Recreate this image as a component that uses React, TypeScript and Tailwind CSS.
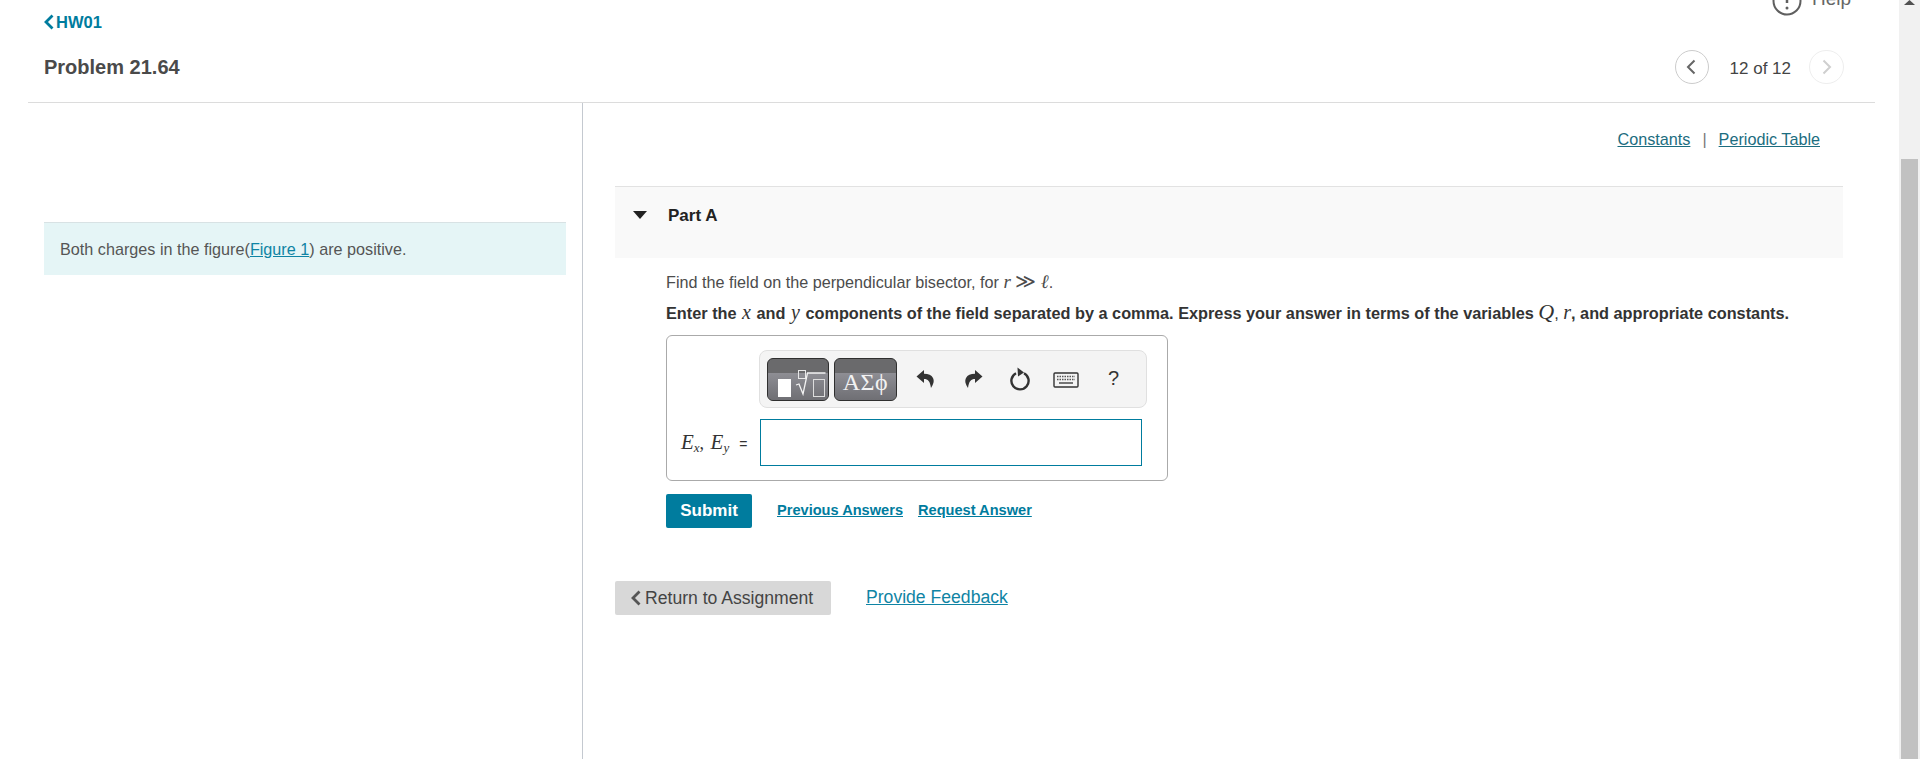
const sans = "font-['Liberation_Sans',Arial,sans-serif]";
const math = "font-['Liberation_Serif',serif] italic";

const Chevron = ({ right = false, weight = 2.8, className = '' }: { right?: boolean; weight?: number; className?: string }) => (
  <svg className={className} width="11" height="16" viewBox="0 0 11 16" fill="none">
    <path d={right ? 'M2.5 1.5L9 8l-6.5 6.5' : 'M8.5 1.5L2 8l6.5 6.5'} stroke="currentColor" strokeWidth={weight} />
  </svg>
);

// Toolbar button with the dark band on top
const ToolButton = ({ width, children }: { width: string; children: React.ReactNode }) => (
  <div className={`relative h-[43px] ${width} rounded-[6px] border border-[#2f2f2f] overflow-hidden bg-[#6a6a6c] shrink-0`}>
    <div className="absolute inset-x-0 bottom-0 top-[14px] bg-gradient-to-b from-[#8e8e94] to-[#6f6f74]" />
    <div className="relative h-full">{children}</div>
  </div>
);

const TemplatesIcon = () => (
  <svg width="60" height="41" viewBox="0 0 60 41" fill="none">
    <rect x="10" y="20" width="13" height="18" fill="#fff" />
    <rect x="30.5" y="11.5" width="7" height="8" stroke="#e8e8e8" strokeWidth="1" />
    <path d="M28 26l3-1 4 10 4.500-21h18" stroke="#f2f2f2" strokeWidth="1.3" />
    <rect x="45.500" y="20.500" width="11" height="17" stroke="#dddddd" strokeWidth="1" />
  </svg>
);

const ArrowIcon = ({ flip = false }: { flip?: boolean }) => (
  <svg className={flip ? '-scale-x-100' : ''} width="19" height="20" viewBox="0 0 19 20">
    <path d="M8 1L0.500 7.500 8 14v-4c4 0 6 2 7 9 2.500-4 3.500-7 2-10-1.500-3-4.500-4-9-4.200z" fill="#333" />
  </svg>
);

const KeyboardIcon = () => (
  <svg width="26" height="16" viewBox="0 0 26 16" fill="none">
    <rect x="1" y="1" width="24" height="14" rx="1" stroke="#333" strokeWidth="1.4" />
    <path d="M4 4.500h18M4 7.500h18" stroke="#555" strokeWidth="1.500" strokeDasharray="1.500 1" />
    <path d="M6 11h14" stroke="#555" strokeWidth="1.600" />
  </svg>
);

const RotateIcon = () => (
  <svg width="22" height="24" viewBox="0 0 22 24" fill="none">
    <path d="M7 6.200A8.600 8.600 0 1 0 15 6.200" stroke="#333" strokeWidth="2.400" />
    <path d="M8.500 0.500l6.500 5-6 4z" fill="#333" />
  </svg>
);

export default function App() {
  return (
    <div className={`flex h-[759px] w-full overflow-hidden bg-white ${sans}`}>
      <div className="flex-1 min-w-0 pl-[28px] pr-[24px]">
        {/* Header */}
        <header className="h-[102px] box-content border-b border-[#dcdcdc] pl-[16px] pr-[31px]">
          <div className="flex justify-between">
            <a className="mt-[13px] flex items-center gap-[1px] text-[#007c9e] text-[16.5px] leading-[18px] font-bold">
              <Chevron />
              HW01
            </a>
            <div className="-mt-[14px] mr-[-18px] flex items-start gap-[10px] text-[#666] text-[19px] leading-[20px]">
              <svg width="30" height="30" viewBox="0 0 30 30" fill="none">
                <circle cx="15" cy="15" r="13.500" stroke="#5f5f5f" strokeWidth="2" />
                <circle cx="15" cy="22" r="1.500" fill="#5f5f5f" />
                <path d="M15 6v11" stroke="#5f5f5f" strokeWidth="2.500" />
              </svg>
              <span className="w-[50px] mt-[3px]">Help</span>
            </div>
          </div>
          <div className="mt-[19px] flex items-center justify-between">
            <h1 className="text-[#4a4a4a] text-[20px] leading-[24px] font-bold">Problem 21.64</h1>
            <div className="flex items-center">
              <button className="w-[34px] h-[34px] rounded-full border border-[#cccccc] flex items-center justify-center text-[#666]">
                <Chevron weight={2} />
              </button>
              <span className="ml-[21px] mr-[18px] mt-[3px] text-[#444] text-[17px] leading-[20px]">12 of 12</span>
              <button className="w-[35px] h-[34px] rounded-full border border-[#eeeeee] flex items-center justify-center text-[#cfcfcf]">
                <Chevron right weight={2} />
              </button>
            </div>
          </div>
        </header>

        <div className="flex h-[657px]">
          {/* Left column */}
          <aside className="w-[555px] shrink-0 border-r border-[#c4c9d0] pt-[119px] pl-[16px] pr-[16px]">
            <div className="h-[53px] border-t border-[#d8e2e4] bg-[#e5f5f6] pl-[16px] pt-[16px] text-[#555] text-[16.2px] leading-[20px]">
              Both charges in the figure(<a className="underline text-[#0f84a4]">Figure 1</a>) are positive.
            </div>
          </aside>

          {/* Right column */}
          <main className="flex-1 min-w-0 pl-[32px] pr-[32px] pt-[26px]">
            <div className="flex justify-end items-center pr-[23px] text-[16.2px] leading-[20px] text-[#1c6d80]">
              <a className="underline">Constants</a>
              <span className="mx-[12px] text-[#777]">|</span>
              <a className="underline">Periodic Table</a>
            </div>

            <section className="mt-[37px] h-[72px] border-t border-[#e2e2e2] bg-[#f9f9f9] flex items-start pt-[19px] pl-[18px]">
              <svg className="mt-[5px]" width="14" height="8" viewBox="0 0 14 8">
                <path d="M0 0h14L7 8z" fill="#222" />
              </svg>
              <h2 className="ml-[21px] text-[#222] text-[17px] leading-[20px] font-bold">Part A</h2>
            </section>

            <div className="pl-[51px]">
              <p className="mt-[13px] text-[#4c4c4c] text-[16.2px] leading-[20px]">
                Find the field on the perpendicular bisector, for <span className={`${math} text-[19px]`}>r</span> <span className="font-['Liberation_Serif',serif] text-[20px]">≫</span> <span className={`${math} text-[19px]`}>ℓ</span>.
              </p>
              <p className="mt-[10px] text-[#333] text-[16.3px] leading-[20px] font-bold whitespace-nowrap">
                Enter the <span className={`${math} font-normal text-[20px] mx-[1px]`}>x</span> and <span className={`${math} font-normal text-[20px] mx-[1px]`}>y</span> components of the field separated by a comma. Express your answer in terms of the variables <span className={`${math} font-normal text-[22px]`}>Q</span><span className="font-normal">,</span> <span className={`${math} font-normal text-[20px]`}>r</span>, and appropriate constants.
              </p>

              {/* Answer box */}
              <div className="mt-[12px] w-[502px] h-[146px] border border-[#aaaaaa] rounded-[6px] pt-[14px] pl-[92px]">
                <div className="w-[388px] h-[58px] border border-[#e0e0e0] rounded-[8px] bg-[#f4f4f4] flex items-center pl-[7px]">
                  <ToolButton width="w-[62px]"><TemplatesIcon /></ToolButton>
                  <div className="ml-[5px]">
                    <ToolButton width="w-[63px]">
                      <div className="h-full pt-[8px] text-center font-['Liberation_Serif',serif] text-[24px] leading-[30px] text-[#f2f2f2] tracking-[0.5px] whitespace-nowrap">ΑΣϕ</div>
                    </ToolButton>
                  </div>
                  <div className="ml-[19px]"><ArrowIcon /></div>
                  <div className="ml-[29px]"><ArrowIcon flip /></div>
                  <div className="ml-[26px]"><RotateIcon /></div>
                  <div className="ml-[22px] mt-[2px]"><KeyboardIcon /></div>
                  <span className="ml-[29px] -mt-[3px] text-[#333] text-[20px] leading-[24px]">?</span>
                </div>
                <div className="mt-[11px] flex items-center">
                  <div className="-ml-[78px] w-[79px] text-[#333] text-[14px] whitespace-nowrap leading-[24px]">
                    <span className={`${math} text-[21px]`}>E<sub className="text-[13px]">x</sub></span>
                    <span className="font-['Liberation_Serif',serif] text-[18px] mr-[2px]">, </span>
                    <span className={`${math} text-[21px]`}>E<sub className="text-[13px]">y</sub></span>
                    <span className="ml-[10px]">=</span>
                  </div>
                  <input className="w-[382px] h-[47px] border border-[#007c9e] bg-white outline-none" />
                </div>
              </div>

              <div className="mt-[13px] flex items-center">
                <button className="w-[86px] h-[34px] rounded-[2px] bg-[#007c9e] text-white text-[17px] font-bold leading-[34px]">Submit</button>
                <a className="ml-[25px] underline font-bold text-[#007c9e] text-[14.6px]">Previous Answers</a>
                <a className="ml-[15px] underline font-bold text-[#007c9e] text-[14.6px]">Request Answer</a>
              </div>
            </div>

            <div className="mt-[53px] flex items-start">
              <button className="w-[216px] h-[34px] rounded-[2px] bg-[#d8d8d8] text-[#444] text-[17.6px] leading-[34px] flex items-center pl-[16px] gap-[3px]">
                <Chevron className="text-[#555]" />
                Return to Assignment
              </button>
              <a className="ml-[35px] mt-[2px] underline text-[#0f84a4] text-[17.6px] leading-[28px]">Provide Feedback</a>
            </div>
          </main>
        </div>
      </div>

      {/* Scrollbar */}
      <div className="relative w-[21px] shrink-0 bg-[#f1f1f1]">
        <svg className="absolute left-[5px] top-0" width="11" height="5" viewBox="0 0 11 5">
          <path d="M5.500 0L11 5H0z" fill="#505050" />
        </svg>
        <div className="absolute left-[2px] right-[2px] top-[159px] bottom-0 bg-[#c1c1c1]" />
      </div>
    </div>
  );
}
